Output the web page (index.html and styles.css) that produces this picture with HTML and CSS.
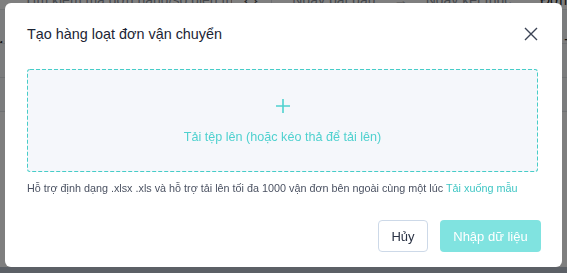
FILE: index.html
```html
<!DOCTYPE html>
<html lang="vi">
<head>
    <meta charset="UTF-8">
    <meta name="viewport" content="width=device-width, initial-scale=1.0">
    <title>Tạo hàng loạt đơn vận chuyển</title>
    <link rel="stylesheet" href="styles.css">
</head>
<body>
    <div class="page">
        <div class="toolbar">
            <div class="search">Tìm kiếm mã đơn hàng/số điện thoại khách hàng</div>
            <div class="scan">{ }</div>
            <div class="dates">
                <span>Ngày bắt đầu</span>
                <span class="arrow">→</span>
                <span>Ngày kết thúc</span>
                <span class="cal"></span>
            </div>
            <div class="tab">Đơn</div>
        </div>
        <div class="row"><span class="cell">Mã đơn hàng</span><span class="cell-end">Trạng thái</span></div>
        <div class="row"><span class="cell">Mã vận đơn</span><span class="cell-end">Thao tác</span></div>
        <div class="row"></div>
        <div class="footer"></div>
    </div>

    <div class="overlay">
        <div class="modal">
            <div class="modal-header">
                <h3>Tạo hàng loạt đơn vận chuyển</h3>
                <button class="close-btn" aria-label="Đóng">
                    <svg width="14" height="14" viewBox="0 0 14 14"><path d="M1 1L13 13M13 1L1 13" stroke="#3b4354" stroke-width="1.4" fill="none"/></svg>
                </button>
            </div>
            <div class="modal-body">
                <div class="dropzone">
                    <svg class="plus" width="16" height="16" viewBox="0 0 16 16"><path d="M8 1V15M1 8H15" stroke="#4fd1cf" stroke-width="1.6" fill="none"/></svg>
                    <div class="drop-text">Tải tệp lên (hoặc kéo thả để tải lên)</div>
                </div>
                <p class="hint">Hỗ trợ định dạng .xlsx .xls và hỗ trợ tải lên tối đa 1000 vận đơn bên ngoài cùng một lúc <a href="#">Tải xuống mẫu</a></p>
            </div>
            <div class="modal-footer">
                <button class="btn-cancel">Hủy</button>
                <button class="btn-import" disabled>Nhập dữ liệu</button>
            </div>
        </div>
    </div>
</body>
</html>
```

FILE: styles.css
```css
* {
    box-sizing: border-box;
}

body {
    margin: 0;
    font-family: "Liberation Sans", Arial, sans-serif;
    background-color: #ffffff;
    height: 273px;
    overflow: hidden;
}

.page {
    height: 273px;
    display: flex;
    flex-direction: column;
}

.toolbar {
    display: flex;
    align-items: center;
    margin-top: -10px;
    padding-left: 24px;
    height: 20px;
    font-size: 14px;
    color: #8a8f98;
    white-space: nowrap;
    border-bottom: 1px solid #e3e6ea;
}

.search {
    width: 214px;
    overflow: hidden;
}

.scan {
    width: 40px;
    padding-left: 12px;
    color: #555;
}

.dates {
    display: flex;
    gap: 18px;
    width: 255px;
    padding-left: 20px;
    border-left: 1px solid #d8dce2;
    overflow: hidden;
}

.arrow {
    color: #aaa;
}

.cal {
    width: 12px;
    height: 11px;
    border: 1px solid #aaa;
    margin-top: 3px;
    flex-shrink: 0;
}

.tab {
    padding-left: 20px;
    color: #222;
}

.row {
    display: flex;
    justify-content: space-between;
    height: 34px;
    padding-top: 26px;
    font-size: 14px;
    color: #222;
    white-space: nowrap;
    overflow: hidden;
    border-bottom: 1px solid #dfe2e6;
    background-color: #f7f8fa;
}

.cell {
    margin-left: -80px;
}

.cell-end {
    margin-right: -60px;
}

.footer {
    margin-top: auto;
    height: 6px;
    background-color: #b8c0cc;
}

.overlay {
    position: fixed;
    inset: 0;
    background-color: rgba(0, 0, 0, 0.5);
    display: flex;
    justify-content: center;
    align-items: flex-start;
    padding-top: 3px;
}

.modal {
    width: 557px;
    height: 264px;
    background-color: #ffffff;
    border-radius: 6px;
    display: flex;
    flex-direction: column;
}

.modal-header {
    display: flex;
    align-items: center;
    justify-content: space-between;
    padding: 20px 23px 0 22px;
}

.modal-header h3 {
    margin: 0;
    font-size: 14.4px;
    font-weight: normal;
    line-height: 22px;
    color: #1c2434;
}

.close-btn {
    background: none;
    border: none;
    padding: 0;
    width: 16px;
    height: 16px;
    display: flex;
    align-items: center;
    justify-content: center;
    cursor: pointer;
}

.modal-body {
    padding: 24px 24px 0 22px;
}

.dropzone {
    height: 103px;
    border-radius: 3px;
    background-color: #f5f7fb;
    background-image: url("data:image/svg+xml,%3csvg xmlns='http://www.w3.org/2000/svg' width='100%25' height='100%25'%3e%3crect width='100%25' height='100%25' fill='none' rx='3' ry='3' stroke='%2347cdc8' stroke-width='2' stroke-dasharray='4%2c 2'/%3e%3c/svg%3e");
    display: flex;
    flex-direction: column;
    align-items: center;
    padding-top: 29px;
}

.drop-text {
    margin-top: 16px;
    font-size: 12.6px;
    color: #4fd1cf;
}

.hint {
    margin: 8px 0 0;
    font-size: 10.8px;
    line-height: 16px;
    color: #4b5262;
}

.hint a {
    color: #3fc6c4;
    text-decoration: none;
}

.modal-footer {
    margin-top: auto;
    display: flex;
    justify-content: flex-end;
    gap: 12px;
    padding: 0 21px 15px 0;
}

.modal-footer button {
    height: 32px;
    border-radius: 4px;
    font-family: inherit;
    font-size: 13px;
}

.btn-cancel {
    width: 50px;
    background-color: #ffffff;
    border: 1px solid #cdd9e8;
    color: #2a3244;
}

.btn-import {
    width: 101px;
    background-color: #80e3e0;
    border: none;
    color: #ffffff;
}
```
